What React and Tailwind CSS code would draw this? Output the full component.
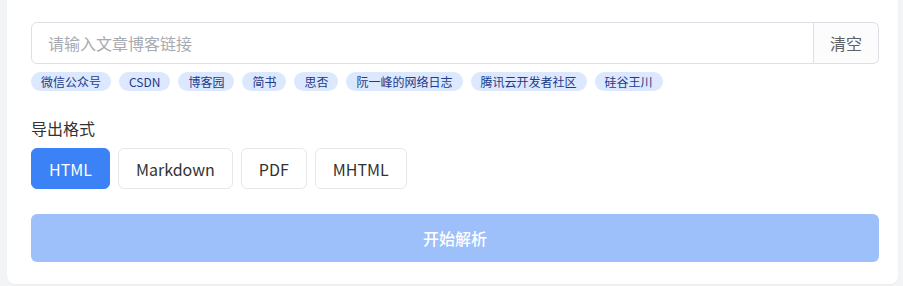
import React from "react";

const tags = ["微信公众号", "CSDN", "博客园", "简书", "思否", "阮一峰的网络日志", "腾讯云开发者社区", "硅谷王川"];
const formats = ["HTML", "Markdown", "PDF", "MHTML"];

export default function App() {
  return (
    <div
      className="w-[903px] h-[286px] bg-[#f3f4f6] overflow-hidden"
      style={{ fontFamily: '"Noto Sans CJK SC", "Noto Sans", sans-serif' }}
    >
      <div className="ml-[7px] w-[891px] h-[284px] bg-white rounded-b-lg pt-[22px] pl-[24px] pr-[19px] shadow-[0_1px_2px_rgba(0,0,0,0.04)]">
        <div className="flex h-[42px] w-[848px]">
          <input
            className="flex-1 min-w-0 h-full border border-[#dcdfe6] rounded-l-md px-4 text-[16px] text-[#606266] placeholder:text-[#a8abb2] outline-none"
            placeholder="请输入文章博客链接"
          />
          <button className="w-[65px] h-full border border-l-0 border-[#dcdfe6] rounded-r-md bg-[#fcfcfd] text-[16px] text-[#606266]">
            清空
          </button>
        </div>
        <div className="flex gap-2 mt-[8px]">
          {tags.map((t) => (
            <span
              key={t}
              className="h-[19px] px-[10px] rounded-full bg-[#dbe8fd] text-[#1e3a8a] text-[12px] leading-[19px]"
            >
              {t}
            </span>
          ))}
        </div>
        <div className="mt-[25px] text-[16px] leading-[24px] text-[#333]">导出格式</div>
        <div className="flex gap-[8px] mt-[8px]">
          {formats.map((f, i) => (
            <button
              key={f}
              className={
                i === 0
                  ? "h-[41px] px-[17px] rounded-md bg-[#3b82f6] text-white text-[16px] border border-[#3b82f6]"
                  : "h-[41px] px-[17px] rounded-md bg-white text-[#333] text-[16px] border border-[#e5e7eb]"
              }
            >
              {f}
            </button>
          ))}
        </div>
        <button className="mt-[25px] w-[848px] h-[48px] rounded-md bg-[#9ec0fa] text-white text-[16px] font-medium">
          开始解析
        </button>
      </div>
    </div>
  );
}
